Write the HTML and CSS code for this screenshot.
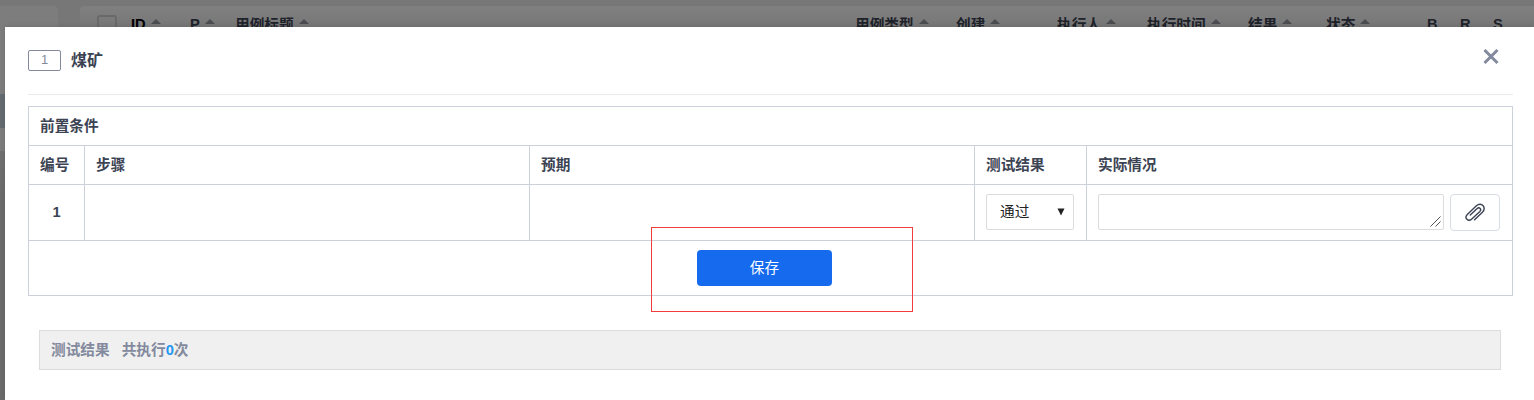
FILE: index.html
```html
<!DOCTYPE html>
<html lang="zh">
<head>
<meta charset="utf-8">
<title>煤矿</title>
<link rel="stylesheet" href="styles.css">
</head>
<body>
<div class="page">
  <aside class="side"><div class="side-active"></div></aside>
  <main class="list">
    <div class="list-head">
      <span class="check"></span>
      <span class="col latin col-id">ID<i class="sort"></i></span>
      <span class="col latin">P<i class="sort"></i></span>
      <span class="col">用例标题<i class="sort"></i></span>
      <span class="col">用例类型<i class="sort"></i></span>
      <span class="col">创建<i class="sort"></i></span>
      <span class="col">执行人<i class="sort"></i></span>
      <span class="col">执行时间<i class="sort"></i></span>
      <span class="col">结果<i class="sort"></i></span>
      <span class="col">状态<i class="sort"></i></span>
      <span class="col latin">B</span>
      <span class="col latin">R</span>
      <span class="col latin">S</span>
    </div>
  </main>
</div>
<div class="modal">
  <header class="modal-head">
    <span class="case-id">1</span>
    <h1 class="case-title">煤矿</h1>
    <svg class="close" width="16" height="16" viewBox="0 0 16 16"><path d="M1.500 1 14.500 14M14.500 1 1.500 14" fill="none" stroke="#838a9d" stroke-width="3"/></svg>
  </header>
  <table class="steps">
    <colgroup><col class="w-no"><col class="w-step"><col class="w-step"><col class="w-result"><col></colgroup>
    <tr class="row"><th colspan="5">前置条件</th></tr>
    <tr class="row"><th>编号</th><th>步骤</th><th>预期</th><th>测试结果</th><th>实际情况</th></tr>
    <tr class="row-step">
      <th class="num">1</th><td></td><td></td>
      <td><div class="select"><span>通过</span><svg width="8" height="8" viewBox="0 0 8 8"><path d="M.5.5h7L4 7.500z" fill="#222"/></svg></div></td>
      <td>
        <div class="actual">
          <div class="textarea"><svg width="11" height="11" viewBox="0 0 11 11"><path d="M.5 10.500l10-10M5.500 10.500l5-5" fill="none" stroke="#555" stroke-width="1"/></svg></div>
          <div class="attach"><svg width="22" height="20" viewBox="0 0 22 20"><path d="M10.600 17.800 18.400 10.200C22.800 5.600 17.400-.8 12.400 3.800L3.300 12.400C-.2 16.100 4.200 20.300 7.800 17L15.600 9.700C18.100 7.200 15.400 4.500 12.900 6.700L6.300 13" fill="none" stroke="#3c4353" stroke-width="1.400" stroke-linecap="round"/></svg></div>
        </div>
      </td>
    </tr>
    <tr class="row-save"><td colspan="5"><div class="save">保存</div></td></tr>
  </table>
  <div class="history"><span>测试结果</span><span>共执行<b class="count">0</b>次</span></div>
</div>
<div class="highlight"></div>
</body>
</html>
```
FILE: styles.css
```css
* { box-sizing: border-box; }
body {
  margin: 0;
  width: 1534px;
  height: 400px;
  overflow: hidden;
  position: relative;
  background: #777;
  color: #3c4353;
  font: 14.67px/20px "Liberation Sans", "Noto Sans CJK SC", sans-serif;
}
.page { display: flex; gap: 22px; height: 400px; padding-top: 6px; background: linear-gradient(#777 0, #777 100px, #6b6b6b 200px); }
.side { width: 58px; height: 145px; padding-top: 88px; background: #7d7d7d; border-radius: 0 4px 0 0; }
.side-active { height: 34px; background: #646c72; }
.list { flex: 1; height: 60px; background: linear-gradient(#808080, #767676 22px); border-radius: 4px 0 0 0; }
.list-head {
  display: grid;
  grid-template-columns: 34px 59px 45px 620px 101px 101px 90px 101px 78px 101px 33px 33px 30px;
  padding: 9px 0 0 17px;
  color: #1e222a;
  font-weight: bold;
}
.check { width: 20px; height: 20px; border: 2px solid #696969; border-radius: 3px; }
.col { display: flex; white-space: nowrap; }
.latin { line-height: 18px; }
.col-id { color: #000; }
.sort { width: 0; height: 0; margin: 4px 0 0 5px; border: 5px solid transparent; border-top: 0; border-bottom-color: #4b4d50; }
.modal {
  position: absolute;
  left: 5px;
  top: 27px;
  width: 1529px;
  height: 373px;
  padding: 0 21px 0 23px;
  background: #fff;
  box-shadow: 0 0 6px rgba(0, 0, 0, .12);
}
.modal-head { display: flex; align-items: flex-start; height: 68px; padding-top: 22px; border-bottom: 1px solid #ebebeb; }
.case-id { width: 33px; height: 21px; margin-top: 1px; border: 1px solid #838a9d; border-radius: 2px; color: #838a9d; font-size: 13px; line-height: 18px; text-align: center; }
.case-title { margin: 2px 0 0 10px; font-size: 16px; line-height: 20px; }
.close { margin: 0 14px 0 auto; }
.steps { width: 1485px; margin-top: 11px; table-layout: fixed; border-collapse: separate; border-spacing: 0; border: solid #cbd0db; border-width: 1px 0 0 1px; }
.steps th, .steps td { padding: 0 11px; border: solid #cbd0db; border-width: 0 1px 1px 0; text-align: left; }
.w-no { width: 56px; }
.w-step { width: 445px; }
.w-result { width: 112px; }
.row { height: 39px; }
.row-step { height: 56px; }
.row-save { height: 55px; }
.steps .num { padding-bottom: 2px; text-align: center; }
.select { display: flex; align-items: center; justify-content: space-between; width: 88px; height: 36px; margin-bottom: 1px; padding: 0 8px 0 13px; border: 1px solid #dcdcdc; border-radius: 2px; color: #222; }
.actual { display: flex; gap: 6px; }
.textarea { display: flex; align-items: flex-end; justify-content: flex-end; width: 346px; height: 36px; padding: 2px; border: 1px solid #dcdcdc; border-radius: 2px; }
.attach { display: flex; align-items: center; justify-content: center; width: 50px; height: 37px; padding-bottom: 2px; border: 1px solid #d8dce5; border-radius: 4px; }
.save { width: 135px; height: 36px; margin-left: 657px; border-radius: 4px; background: #156aed; color: #fff; line-height: 36px; text-align: center; }
.history { display: flex; gap: 12px; align-items: center; width: 1462px; height: 40px; margin: 34px 0 0 11px; padding: 0 11px; border: 1px solid #dcdcdc; background: #f0f0f0; color: #838a9d; font-weight: bold; }
.count { color: #2196f3; }
.highlight { position: absolute; left: 651px; top: 227px; width: 262px; height: 85px; border: 1px solid #f23d3d; }
```
